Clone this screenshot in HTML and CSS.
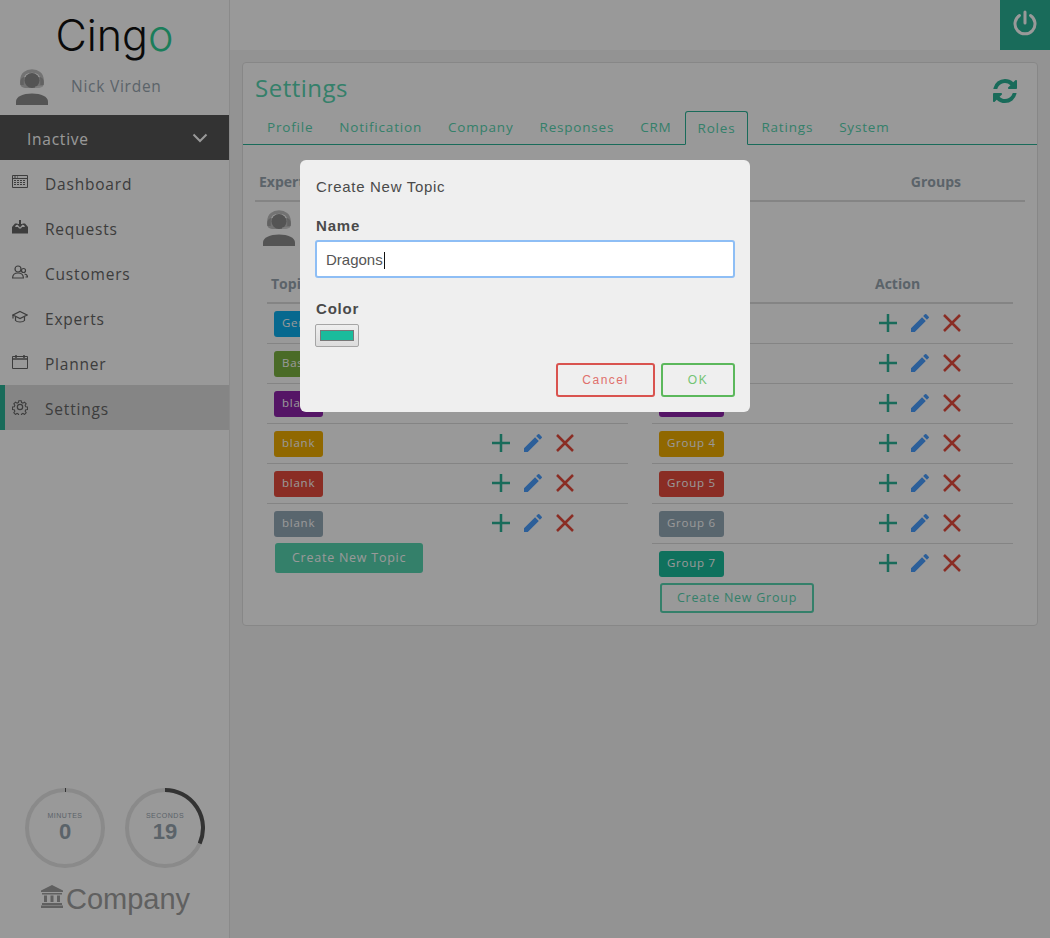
FILE: index.html
```html
<!DOCTYPE html>
<html lang="en">
<head>
    <meta charset="UTF-8">
    <meta name="viewport" content="width=device-width, initial-scale=1.0">
    <title>Cingo | Settings</title>
    <link rel="stylesheet" href="styles.css">
</head>
<body>

    <!-- Shared icons -->
    <svg class="icon-defs" width="0" height="0">
        <symbol id="i-plus" viewBox="0 0 24 24"><path d="M12 3v18M3 12h18" fill="none" stroke="currentColor" stroke-width="2.5"/></symbol>
        <symbol id="i-edit" viewBox="0 0 24 24"><path fill="currentColor" d="M3 17.25V21h3.75L17.81 9.94l-3.75-3.75L3 17.25zM20.71 7.04a1 1 0 0 0 0-1.41l-2.34-2.34a1 1 0 0 0-1.41 0l-1.83 1.83 3.75 3.75 1.83-1.83z"/></symbol>
        <symbol id="i-del" viewBox="0 0 24 24"><path d="M4 4l16 16M20 4L4 20" fill="none" stroke="currentColor" stroke-width="2.5"/></symbol>
        <symbol id="i-agent" viewBox="0 0 32 36">
            <path fill="currentColor" d="M0 36v-3.500c0-5 7-8 16-8s16 3 16 8V36z"/>
            <path fill="none" stroke="currentColor" stroke-width="3.500" opacity=".55" d="M6 16V11C6 5 10.500 2 16 2s10 3 10 9v5"/>
            <rect fill="currentColor" opacity=".55" x="4" y="8" width="24" height="11" rx="5"/>
            <ellipse fill="currentColor" cx="16" cy="11.500" rx="7.500" ry="7.500"/>
            <path fill="none" stroke="#fff" stroke-width="1" opacity=".6" d="M19 18h7"/>
        </symbol>
    </svg>

    <aside class="sidebar">
        <div class="logo">Cing<span class="logo-o">o</span></div>
        <div class="user">
            <svg class="user-pic"><use href="#i-agent"/></svg>
            <span>Nick Virden</span>
        </div>
        <div class="status">
            <span>Inactive</span>
            <svg width="16" height="10" viewBox="0 0 16 10"><path d="M1.500 1.500L8 8l6.500-6.500" fill="none" stroke="currentColor" stroke-width="2"/></svg>
        </div>

        <nav class="menu">
            <a class="menu-item">
                <svg viewBox="0 0 16 16"><path fill="none" stroke="currentColor" d="M.5 1.500h15v12H.5zM.5 4.500h15"/><path stroke="currentColor" stroke-dasharray="2 1" d="M2 6.500h12M2 8.500h12M2 10.500h12M2 3h4"/></svg>
                Dashboard
            </a>
            <a class="menu-item">
                <svg viewBox="0 0 16 16"><path fill="currentColor" d="M0 8l3-3.500h2.500v1.500H4L3 8h3l1 1.500h2L10 8h3l-1-2h-1.500V4.500H13L16 8v6.500H0z"/><path fill="currentColor" d="M7 1h2v4h2L8 8.500 5 5h2z"/></svg>
                Requests
            </a>
            <a class="menu-item">
                <svg viewBox="0 0 16 16"><g fill="none" stroke="currentColor" stroke-width="1.200"><circle cx="6" cy="5" r="3"/><path d="M.6 14c0-3 2-5 5.400-5s5.400 2 5.400 5z"/><circle cx="11.500" cy="6.500" r="2"/><path d="M12.500 10c2 .2 3 1.500 3 3h-2"/></g></svg>
                Customers
            </a>
            <a class="menu-item">
                <svg viewBox="0 0 16 16"><g fill="none" stroke="currentColor" stroke-width="1.200"><path d="M8 2.500L15 6 8 9.500 1 6z"/><path d="M3.500 8v3.500C5 13.500 11 13.500 12.500 11.500V8"/><path d="M1 6v3.500"/></g></svg>
                Experts
            </a>
            <a class="menu-item">
                <svg viewBox="0 0 16 16"><path fill="none" stroke="currentColor" d="M.5 2.500h15v12H.5z"/><path stroke="currentColor" stroke-width="1.500" d="M0 5h16M4 1v3M12 1v3"/></svg>
                Planner
            </a>
            <a class="menu-item active">
                <svg viewBox="0 0 24 24"><path fill="none" stroke="currentColor" stroke-width="1.800" d="M10 1.500h4l.6 3 2.300 1 2.600-1.700 2.800 2.800-1.700 2.600 1 2.300 3 .6v4l-3 .6-1 2.300 1.700 2.600-2.800 2.800-2.600-1.700-2.300 1-.6 3h-4l-.6-3-2.300-1-2.600 1.700-2.800-2.800 1.700-2.600-1-2.300-3-.6v-4l3-.6 1-2.300L1.700 6.600l2.800-2.800 2.600 1.700 2.300-1z" transform="translate(1.200 1.200) scale(.9)"/><circle cx="12" cy="12" r="4" fill="none" stroke="currentColor" stroke-width="1.800"/></svg>
                Settings
            </a>
        </nav>

        <div class="timers">
            <div class="timer">
                <svg viewBox="0 0 80 80"><circle class="timer-track" cx="40" cy="40" r="38"/><path class="timer-tick" d="M40.500 0v4"/></svg>
                <div class="timer-text"><small>MINUTES</small><b>0</b></div>
            </div>
            <div class="timer">
                <svg viewBox="0 0 80 80"><circle class="timer-track" cx="40" cy="40" r="38"/><path class="timer-arc" d="M40 2A38 38 0 0 1 74.700 55.500"/></svg>
                <div class="timer-text"><small>SECONDS</small><b>19</b></div>
            </div>
        </div>

        <div class="company">
            <svg width="22" height="23" viewBox="0 0 22 23"><path fill="currentColor" d="M11 0l11 5.500V7H0V5.500zM1 8h20v1.500H1zM3 10.500h3v6.500H3zM9.500 10.500h3v6.500h-3zM16 10.500h3v6.500h-3zM1 18h20v2H1zM0 20.500h22V23H0z"/></svg>
            Company
        </div>
    </aside>

    <main class="main">
        <div class="topbar">
            <button class="power">
                <svg width="26" height="26" viewBox="0 0 26 26"><path d="M7.500 5.500a10 10 0 1 0 11 0M13 2v11" fill="none" stroke="currentColor" stroke-width="3" stroke-linecap="round"/></svg>
            </button>
        </div>

        <section class="panel">
            <div class="panel-head">
                <h1>Settings</h1>
                <svg class="refresh" width="28" height="28" viewBox="0 0 1792 1792"><path fill="currentColor" d="M1639 1056q0 5-1 7-64 268-268 434.500t-478 166.500q-146 0-282.500-55t-243.500-157l-129 129q-19 19-45 19t-45-19-19-45v-448q0-26 19-45t45-19h448q26 0 45 19t19 45-19 45l-137 137q71 66 161 102t187 36q134 0 250-65t186-179q11-17 53-117 8-23 30-23h192q13 0 22.500 9.500t9.500 22.500zm25-800v448q0 26-19 45t-45 19h-448q-26 0-45-19t-19-45 19-45l138-138q-148-137-349-137-134 0-250 65t-186 179q-11 17-53 117-8 23-30 23h-199q-13 0-22.500-9.500t-9.500-22.500v-7q65-268 270-434.500t480-166.500q146 0 284 55.500t245 156.500l130-129q19-19 45-19t45 19 19 45z"/></svg>
            </div>

            <div class="tabs">
                <a class="tab">Profile</a>
                <a class="tab">Notification</a>
                <a class="tab">Company</a>
                <a class="tab">Responses</a>
                <a class="tab">CRM</a>
                <a class="tab active">Roles</a>
                <a class="tab">Ratings</a>
                <a class="tab">System</a>
            </div>

            <div class="experts-head">
                <span>Experts</span>
                <span>Groups</span>
            </div>
            <div class="expert-row">
                <svg class="user-pic"><use href="#i-agent"/></svg>
            </div>

            <div class="columns">
                <!-- Topics -->
                <div class="col col-topics">
                    <div class="row head"><span>Topics</span><span>Action</span></div>
                    <div class="row"><span class="badge blue">General</span><span class="acts"><svg class="plus"><use href="#i-plus"/></svg><svg class="edit"><use href="#i-edit"/></svg><svg class="del"><use href="#i-del"/></svg></span></div>
                    <div class="row"><span class="badge green">Basic</span><span class="acts"><svg class="plus"><use href="#i-plus"/></svg><svg class="edit"><use href="#i-edit"/></svg><svg class="del"><use href="#i-del"/></svg></span></div>
                    <div class="row"><span class="badge purple">blank</span><span class="acts"><svg class="plus"><use href="#i-plus"/></svg><svg class="edit"><use href="#i-edit"/></svg><svg class="del"><use href="#i-del"/></svg></span></div>
                    <div class="row"><span class="badge amber">blank</span><span class="acts"><svg class="plus"><use href="#i-plus"/></svg><svg class="edit"><use href="#i-edit"/></svg><svg class="del"><use href="#i-del"/></svg></span></div>
                    <div class="row"><span class="badge red">blank</span><span class="acts"><svg class="plus"><use href="#i-plus"/></svg><svg class="edit"><use href="#i-edit"/></svg><svg class="del"><use href="#i-del"/></svg></span></div>
                    <div class="row last"><span class="badge grey">blank</span><span class="acts"><svg class="plus"><use href="#i-plus"/></svg><svg class="edit"><use href="#i-edit"/></svg><svg class="del"><use href="#i-del"/></svg></span></div>
                    <a class="btn btn-fill">Create New Topic</a>
                </div>

                <!-- Groups -->
                <div class="col col-groups">
                    <div class="row head"><span>Groups</span><span>Action</span></div>
                    <div class="row"><span class="badge blue">Group 1</span><span class="acts"><svg class="plus"><use href="#i-plus"/></svg><svg class="edit"><use href="#i-edit"/></svg><svg class="del"><use href="#i-del"/></svg></span></div>
                    <div class="row"><span class="badge green">Group 2</span><span class="acts"><svg class="plus"><use href="#i-plus"/></svg><svg class="edit"><use href="#i-edit"/></svg><svg class="del"><use href="#i-del"/></svg></span></div>
                    <div class="row"><span class="badge purple">Group 3</span><span class="acts"><svg class="plus"><use href="#i-plus"/></svg><svg class="edit"><use href="#i-edit"/></svg><svg class="del"><use href="#i-del"/></svg></span></div>
                    <div class="row"><span class="badge amber">Group 4</span><span class="acts"><svg class="plus"><use href="#i-plus"/></svg><svg class="edit"><use href="#i-edit"/></svg><svg class="del"><use href="#i-del"/></svg></span></div>
                    <div class="row"><span class="badge red">Group 5</span><span class="acts"><svg class="plus"><use href="#i-plus"/></svg><svg class="edit"><use href="#i-edit"/></svg><svg class="del"><use href="#i-del"/></svg></span></div>
                    <div class="row"><span class="badge grey">Group 6</span><span class="acts"><svg class="plus"><use href="#i-plus"/></svg><svg class="edit"><use href="#i-edit"/></svg><svg class="del"><use href="#i-del"/></svg></span></div>
                    <div class="row last"><span class="badge teal">Group 7</span><span class="acts"><svg class="plus"><use href="#i-plus"/></svg><svg class="edit"><use href="#i-edit"/></svg><svg class="del"><use href="#i-del"/></svg></span></div>
                    <a class="btn btn-line">Create New Group</a>
                </div>
            </div>
        </section>
    </main>

    <!-- Create topic dialog -->
    <div class="overlay">
        <form class="modal">
            <div class="modal-title">Create New Topic</div>
            <label class="field-label">Name</label>
            <div class="field">Dragons<span class="caret"></span></div>
            <label class="field-label color-label">Color</label>
            <input class="color" type="color" value="#1abc9c">
            <div class="modal-buttons">
                <button type="button" class="modal-btn cancel">Cancel</button>
                <button type="button" class="modal-btn ok">OK</button>
            </div>
        </form>
    </div>

</body>
</html>
```

FILE: styles.css
```css
* {
    margin: 0;
    padding: 0;
    box-sizing: border-box;
}
body {
    display: flex;
    height: 100vh;
    overflow: hidden;
    background: #f5f5f5;
    font-family: "Open Sans", sans-serif;
    color: #666;
}
.icon-defs {
    position: absolute;
}
/* Sidebar */
.sidebar {
    width: 230px;
    flex: none;
    display: flex;
    flex-direction: column;
    background: #fff;
    border-right: 1px solid #e6e6e6;
}
.logo {
    height: 69px;
    padding-top: 3px;
    text-align: center;
    font-family: Inter, sans-serif;
    font-weight: 300;
    font-size: 43px;
    line-height: 64px;
    color: #111;
}
.logo-o {
    color: #2ed196;
}
.user {
    height: 46px;
    display: flex;
    gap: 23px;
    padding-left: 16px;
    font-size: 15.5px;
    line-height: 34px;
    letter-spacing: .75px;
    color: #98a6b0;
}
.user-pic {
    width: 32px;
    height: 36px;
    color: #8c8c8c;
}
.status {
    height: 45px;
    flex: none;
    display: flex;
    align-items: center;
    justify-content: space-between;
    padding: 2px 21px 0 27px;
    background: #555;
    color: #fff;
    font-size: 15.5px;
    letter-spacing: .75px;
}
.status svg {
    margin-top: -2px;
}
.menu-item {
    height: 45px;
    display: flex;
    align-items: center;
    gap: 17px;
    padding: 2px 0 0 7px;
    border-left: 5px solid transparent;
    font-size: 15.5px;
    letter-spacing: .8px;
    color: #666;
}
.menu-item svg {
    width: 16px;
    height: 16px;
    margin-top: -4px;
}
.menu-item.active {
    background: #dedede;
    border-left-color: #2bb296;
}
.timers {
    margin-top: auto;
    display: flex;
    gap: 20px;
    padding-left: 25px;
}
.timer {
    width: 80px;
    height: 80px;
    position: relative;
}
.timer-track {
    fill: none;
    stroke: #e6e6e6;
    stroke-width: 4;
}
.timer-tick {
    stroke: #555;
    stroke-width: 1;
}
.timer-arc {
    fill: none;
    stroke: #555;
    stroke-width: 4;
}
.timer-text {
    position: absolute;
    top: 23px;
    left: 0;
    right: 0;
    text-align: center;
    font-family: "Liberation Sans", sans-serif;
    color: #98a6b0;
}
.timer-text small {
    display: block;
    font-size: 7px;
    line-height: 9px;
    letter-spacing: .5px;
}
.timer-text b {
    display: block;
    font-size: 22px;
    line-height: 24px;
}
.company {
    height: 70px;
    padding: 16px 0 0 41px;
    display: flex;
    align-items: flex-start;
    gap: 3px;
    font-family: "Liberation Sans", sans-serif;
    font-size: 29px;
    line-height: 30px;
    color: #a0a0a0;
}
.company svg {
    margin-top: 1px;
}
/* Main area */
.main {
    flex: 1;
    min-width: 0;
}
.topbar {
    height: 50px;
    display: flex;
    justify-content: flex-end;
    background: #fff;
}
.power {
    width: 50px;
    height: 50px;
    display: flex;
    align-items: center;
    justify-content: center;
    padding-bottom: 4px;
    border: none;
    background: #2bb296;
    color: #fff;
}
.panel {
    height: 564px;
    margin: 12px 12px 0;
    padding: 0 12px;
    background: #fff;
    border: 1px solid #e2e2e2;
    border-radius: 4px;
}
.panel-head {
    height: 48px;
    display: flex;
    justify-content: space-between;
    color: #2bb296;
}
h1 {
    font-size: 24px;
    font-weight: 400;
    line-height: 33px;
    margin-top: 8px;
    letter-spacing: .5px;
    color: #58d5b1;
}
.refresh {
    margin: 14px 6px 0 0;
}
.tabs {
    display: flex;
    height: 34px;
    margin: 0 -12px;
    padding-left: 11px;
    border-bottom: 1px solid #2bb296;
}
.tab {
    height: 34px;
    padding: 5px 12px 0;
    border: 1px solid transparent;
    font-size: 13.5px;
    line-height: 20px;
    letter-spacing: .8px;
    color: #58d5b1;
}
.tab.active {
    padding-top: 6px;
    background: #fff;
    border-color: #2bb296;
    border-bottom-color: #fff;
    border-radius: 3px 3px 0 0;
}
.experts-head {
    height: 57px;
    display: flex;
    justify-content: space-between;
    align-items: flex-end;
    padding: 0 64px 9px 4px;
    border-bottom: 2px solid #dcdcdc;
    font-size: 14px;
    font-weight: 700;
    color: #98a6b0;
}
.expert-row {
    height: 62px;
    padding: 8px 0 0 8px;
}
.columns {
    display: grid;
    grid-template-columns: 361px 361px;
    gap: 24px;
    padding-left: 12px;
}
.row {
    height: 40px;
    display: grid;
    align-items: start;
    padding-top: 7px;
    border-bottom: 1px solid #dcdcdc;
}
.col-topics .row {
    grid-template-columns: 222px 1fr;
}
.col-groups .row {
    grid-template-columns: 224px 1fr;
}
.row.last {
    height: 39px;
    border-bottom: none;
}
.row.head {
    height: 40px;
    padding: 10px 0 0 4px;
    border-bottom: 2px solid #dcdcdc;
    font-size: 14px;
    font-weight: 700;
    color: #98a6b0;
}
.col-groups .row.head {
    grid-template-columns: 219px 1fr;
}
.badge {
    justify-self: start;
    height: 26px;
    margin-left: 7px;
    padding: 0 8px;
    border-radius: 3px;
    font-size: 11.5px;
    line-height: 23px;
    letter-spacing: .75px;
    color: #fff;
}
.blue { background: #0db0ee; }
.green { background: #7cb342; }
.purple { background: #8e24aa; }
.amber { background: #f0ad00; }
.red { background: #e74c3c; }
.grey { background: #95aab8; }
.teal { background: #1abc9c; }
.acts {
    display: flex;
    gap: 8px;
}
.acts svg {
    width: 24px;
    height: 24px;
}
.plus { color: #2bb296; }
.edit { color: #4a9eff; }
.del { color: #e74c3c; }
.btn {
    display: inline-block;
    height: 30px;
    margin-left: 8px;
    padding: 0 17px;
    border-radius: 3px;
    font-size: 12.5px;
    line-height: 29px;
    letter-spacing: .75px;
}
.btn-fill {
    background: #58d5b1;
    color: #fff;
}
.btn-line {
    border: 2px solid #58d5b1;
    line-height: 26px;
    padding: 0 15px;
    color: #58d5b1;
}
/* Dialog */
.overlay {
    position: fixed;
    inset: 0;
    display: flex;
    justify-content: center;
    align-items: flex-start;
    padding-top: 160px;
    background: rgba(0, 0, 0, 0.4);
}
.modal {
    width: 450px;
    height: 252px;
    padding: 18px 15px 0;
    background: #efefef;
    border-radius: 6px;
    font-family: "Liberation Sans", sans-serif;
    color: #4a4a4a;
}
.modal-title {
    font-size: 15px;
    line-height: 18px;
    letter-spacing: .7px;
    padding-left: 1px;
}
.field-label {
    display: block;
    padding-left: 1px;
    margin-top: 21px;
    font-size: 15px;
    font-weight: 700;
    line-height: 18px;
    letter-spacing: .8px;
}
.field {
    height: 38px;
    margin-top: 5px;
    padding-left: 9px;
    background: #fff;
    border: 2px solid #8ebef5;
    border-radius: 3px;
    font-size: 15px;
    line-height: 35px;
    color: #555;
}
.caret {
    display: inline-block;
    width: 1px;
    height: 17px;
    margin-left: 1px;
    vertical-align: -4px;
    background: #111;
}
.color-label {
    margin-top: 22px;
}
.color {
    display: block;
    width: 44px;
    height: 23px;
    margin-top: 6px;
    padding: 5px 4px;
    background: linear-gradient(#efefef, #dcdcdc);
    border: 1px solid #a5a5a5;
    border-radius: 2px;
}
.color::-webkit-color-swatch-wrapper {
    padding: 0;
}
.color::-webkit-color-swatch {
    border: 1px solid #777;
}
.modal-buttons {
    display: flex;
    justify-content: flex-end;
    gap: 6px;
    margin-top: 16px;
}
.modal-btn {
    height: 34px;
    border: 2px solid;
    border-radius: 3px;
    background: transparent;
    font-family: "Liberation Sans", sans-serif;
    font-size: 12px;
    letter-spacing: 1.5px;
}
.cancel {
    width: 99px;
    border-color: #d9534f;
    color: #e0706c;
}
.ok {
    width: 74px;
    border-color: #5cb85c;
    color: #74c474;
}
```
